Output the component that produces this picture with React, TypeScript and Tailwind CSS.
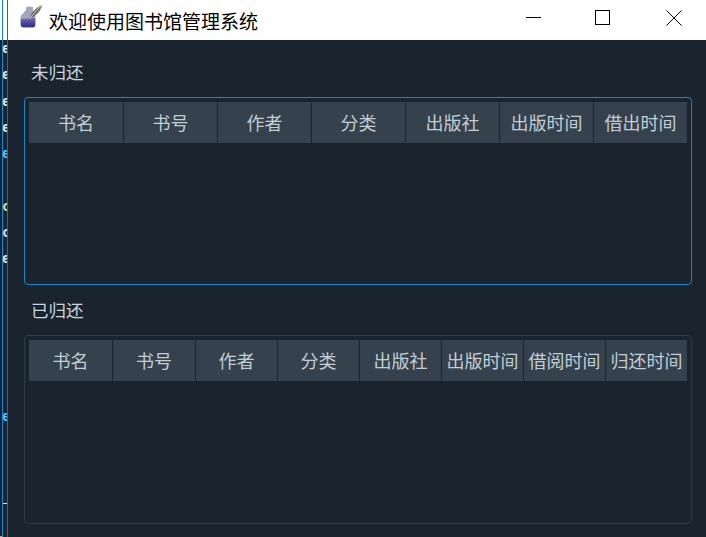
const font = { fontFamily: '"Noto Sans CJK SC", sans-serif' };

const stripRows: [string, string][] = [
  ["e", "text-[#dbe4ea]"],
  ["e", "text-[#dbe4ea]"],
  ["e", "text-[#dbe4ea]"],
  ["e", "text-[#dbe4ea]"],
  ["e", "text-[#4fc1ff]"],
  ["", ""],
  ["c", "text-[#dcdc8b]"],
  ["c", "text-[#dbe4ea]"],
  ["e", "text-[#dbe4ea]"],
  ["", ""],
  ["", ""],
  ["", ""],
  ["", ""],
  ["", ""],
  ["e", "text-[#4fc1ff]"],
];

function BackgroundStrip() {
  return (
    <div className="relative w-[8px] shrink-0 flex flex-col bg-[#1a242e]">
      <div className="h-[40px] pl-[2px] bg-white">
        <div className="h-full border-l border-r border-l-[#1488e0] border-r-[#4e5c70]" />
      </div>
      <div className="relative flex-1 ml-[2px] border-l border-r border-l-[#1488e0] border-r-[#4e5c70] overflow-hidden">
        <div className="-mt-[5px] flex flex-col">
          {stripRows.map(([c, color], i) => (
            <div
              key={i}
              className={`h-[26.3px] leading-[26px] text-[14px] font-bold -ml-[1px] ${color}`}
              style={{ fontFamily: '"DejaVu Sans Mono", monospace' }}
            >
              {c}
            </div>
          ))}
        </div>
        <div className="absolute left-0 right-0 top-[463px] h-[1px] bg-[#dbe4ea]" />
      </div>
      <div className="absolute left-0 bottom-0 w-[2px] h-[1px] bg-[#e0a030]" />
    </div>
  );
}

function TitleBar() {
  return (
    <div className="h-[40px] bg-white flex items-center pl-[12px]">
      <svg width="23" height="24" viewBox="0 0 23 24" className="shrink-0 mb-[8px]">
        <defs>
          <linearGradient id="ink" x1="0" y1="0" x2="0" y2="1">
            <stop offset="0" stopColor="#6c6cb4" />
            <stop offset="1" stopColor="#2c2c84" />
          </linearGradient>
        </defs>
        <path d="M4 9 C4 7 5 7 6 7 L6 4 C6 3 7 2.5 9 2.5 L13 3 L13 9 C15 10 15.5 11 15.5 13 L15.5 21 C15.5 23 14 23.5 12 23.5 L5 23.5 C2 23.5 0.5 23 0.5 20.5 L0.5 13 C0.5 11 2 10 4 9 Z" fill="#a3a6bc" />
        <path d="M0.8 15 L15.2 14 L15.2 21 C15.2 23 14 23.2 12 23.2 L5 23.2 C2 23.2 0.8 23 0.8 20.5 Z" fill="url(#ink)" />
        <path d="M10 15 C10 10 14 5 22.5 0.5 C21 5 19 9 15 11.5 C13 13 11.5 14 10 15 Z" fill="#6f6a60" />
        <path d="M10 15 C12 11 16 7 22 1" stroke="#e9e6dc" strokeWidth="0.8" fill="none" />
      </svg>
      <span className="ml-[6px] text-[19px] leading-none text-black" style={font}>
        欢迎使用图书馆管理系统
      </span>
      <div className="ml-auto flex items-center h-full pb-[4px] pr-[24px]">
        <svg width="16" height="16" viewBox="0 0 16 16" className="mr-[53px]">
          <path d="M0 7.5 H15" stroke="#000" strokeWidth="1" />
        </svg>
        <svg width="16" height="16" viewBox="0 0 16 16" className="mr-[55px]">
          <rect x="0.5" y="0.5" width="14" height="14" fill="none" stroke="#000" strokeWidth="1" />
        </svg>
        <svg width="16" height="16" viewBox="0 0 16 16">
          <path d="M0.5 0.5 L15.5 15.5 M15.5 0.5 L0.5 15.5" stroke="#000" strokeWidth="1" />
        </svg>
      </div>
    </div>
  );
}

function BookTable({ columns, active, height }: { columns: string[]; active?: boolean; height: string }) {
  return (
    <div className={`${height} mr-[14px] rounded-[4px] border p-[4px] ${active ? "border-[#1a84cc]" : "border-[#2f3b46]"}`}>
      <div
        className={`grid h-[41px] bg-[#35424e] ${
          columns.length === 7
            ? "grid-cols-[95px_94px_94px_94px_94px_94px_93px]"
            : "grid-cols-[84px_83px_82px_82px_82px_82px_82px_81px]"
        }`}
      >
        {columns.map((c, i) => (
          <div
            key={c}
            className={`flex items-center justify-center pb-[2px] text-[18px] leading-none text-[#c2cdd5] whitespace-nowrap ${i < columns.length - 1 ? "border-r border-[#1a242e]" : ""}`}
            style={font}
          >
            {c}
          </div>
        ))}
      </div>
    </div>
  );
}

function SectionLabel({ text }: { text: string }) {
  return (
    <div className="h-[50px] flex items-center pl-[7px] text-[17.5px] leading-none text-[#cbd5dc]" style={font}>
      {text}
    </div>
  );
}

export default function App() {
  return (
    <div className="w-[706px] h-[537px] flex overflow-hidden bg-[#1a242e]">
      <BackgroundStrip />
      <div className="flex-1 flex flex-col min-w-0">
        <TitleBar />
        <div className="flex-1 pl-[16px] pt-[7px]">
          <SectionLabel text="未归还" />
          <BookTable active height="h-[188px]" columns={["书名", "书号", "作者", "分类", "出版社", "出版时间", "借出时间"]} />
          <SectionLabel text="已归还" />
          <BookTable height="h-[189px]" columns={["书名", "书号", "作者", "分类", "出版社", "出版时间", "借阅时间", "归还时间"]} />
        </div>
      </div>
    </div>
  );
}
